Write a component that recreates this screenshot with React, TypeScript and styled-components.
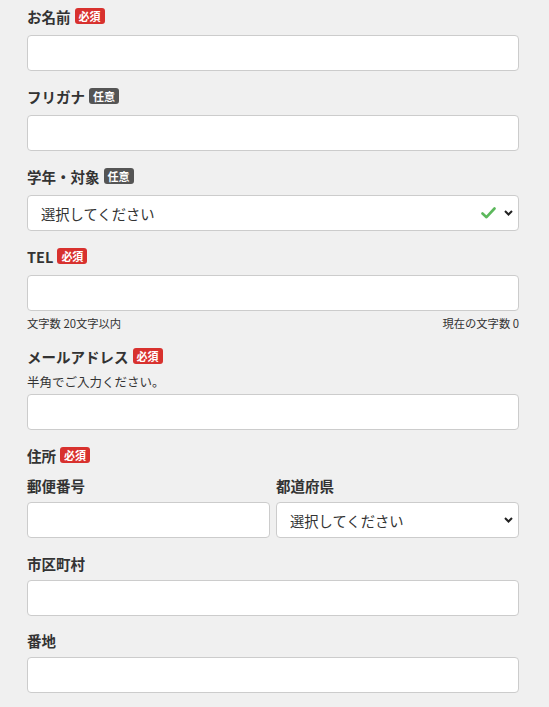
import React from "react";
import styled, { createGlobalStyle } from "styled-components";

const Global = createGlobalStyle`
  html, body { margin: 0; padding: 0; background: #f0f0f0; }
  body { font-family: "Noto Sans CJK JP", "Noto Sans", sans-serif; color: #333; }
  * { box-sizing: border-box; }
`;

const Form = styled.form`
  width: 492px;
  margin-left: 27px;
  padding-top: 5px;
  display: flex;
  flex-direction: column;
`;

const Field = styled.div<{ $gap?: number }>`
  display: flex;
  flex-direction: column;
  margin-bottom: ${(p) => p.$gap ?? 14}px;
`;

const LabelRow = styled.div`
  display: flex;
  align-items: center;
  gap: 4px;
  height: 22px;
  margin-bottom: 8px;
  font-size: 14.5px;
  font-weight: 700;
  color: #333;
`;

const SubLabel = styled.div`
  font-size: 14.5px;
  font-weight: 700;
  line-height: 20px;
  margin-bottom: 6px;
  color: #333;
`;

const Badge = styled.span<{ $required?: boolean }>`
  display: inline-flex;
  align-items: center;
  height: 16px;
  padding: 0 4px;
  border-radius: 3px;
  font-size: 11px;
  font-weight: 700;
  color: #fff;
  background: ${(p) => (p.$required ? "#d8312e" : "#555")};
`;

const Input = styled.input`
  width: 100%;
  height: 36px;
  border: 1px solid #ccc;
  border-radius: 4px;
  background: #fff;
  font-family: inherit;
  font-size: 14px;
  padding: 0 13px;
  outline: none;
`;

const SelectWrap = styled.div`
  position: relative;
  width: 100%;
`;

const Select = styled.select`
  width: 100%;
  height: 36px;
  border: 1px solid #ccc;
  border-radius: 4px;
  background: #fff;
  font-family: inherit;
  font-size: 14.3px;
  color: #333;
  padding: 0 40px 0 13px;
  appearance: none;
  -webkit-appearance: none;
  outline: none;
`;

const Icons = styled.div`
  position: absolute;
  right: 6px;
  top: 0;
  bottom: 0;
  display: flex;
  align-items: center;
  gap: 8px;
  pointer-events: none;
`;

const Helper = styled.div`
  display: flex;
  justify-content: space-between;
  margin-top: 4px;
  font-size: 11.3px;
  line-height: 16px;
  color: #333;
`;

const Note = styled.div`
  font-size: 12.5px;
  line-height: 18px;
  margin-top: -2px;
  margin-bottom: 3px;
  color: #333;
`;

const Split = styled.div`
  display: grid;
  grid-template-columns: 1fr 1fr;
  gap: 6px;
  margin-top: 2px;
`;

const Col = styled.div`
  display: flex;
  flex-direction: column;
`;

const Check = () => (
  <svg width="15" height="12" viewBox="0 0 15 12">
    <path d="M1.5 6.5 L5.5 10.2 L13.5 1.5" fill="none" stroke="#5cb85c" strokeWidth="2.6" strokeLinecap="round" strokeLinejoin="round" />
  </svg>
);

const Chevron = () => (
  <svg width="9" height="6" viewBox="0 0 9 6">
    <path d="M1 1 L4.5 4.5 L8 1" fill="none" stroke="#222" strokeWidth="2" />
  </svg>
);

const PickSelect = ({ check }: { check?: boolean }) => (
  <SelectWrap>
    <Select defaultValue="">
      <option value="">選択してください</option>
    </Select>
    <Icons>
      {check && <Check />}
      <Chevron />
    </Icons>
  </SelectWrap>
);

export default function App() {
  return (
    <>
      <Global />
      <Form>
        <Field>
          <LabelRow>お名前<Badge $required>必須</Badge></LabelRow>
          <Input />
        </Field>
        <Field>
          <LabelRow>フリガナ<Badge>任意</Badge></LabelRow>
          <Input />
        </Field>
        <Field>
          <LabelRow>学年・対象<Badge>任意</Badge></LabelRow>
          <PickSelect check />
        </Field>
        <Field>
          <LabelRow>TEL<Badge $required>必須</Badge></LabelRow>
          <Input />
          <Helper>
            <span>文字数 20文字以内</span>
            <span>現在の文字数 0</span>
          </Helper>
        </Field>
        <Field>
          <LabelRow>メールアドレス<Badge $required>必須</Badge></LabelRow>
          <Note>半角でご入力ください。</Note>
          <Input />
        </Field>
        <Field $gap={16}>
          <LabelRow>住所<Badge $required>必須</Badge></LabelRow>
          <Split>
            <Col>
              <SubLabel>郵便番号</SubLabel>
              <Input />
            </Col>
            <Col>
              <SubLabel>都道府県</SubLabel>
              <PickSelect />
            </Col>
          </Split>
        </Field>
        <Field $gap={15}>
          <SubLabel>市区町村</SubLabel>
          <Input />
        </Field>
        <Field>
          <SubLabel>番地</SubLabel>
          <Input />
        </Field>
      </Form>
    </>
  );
}
